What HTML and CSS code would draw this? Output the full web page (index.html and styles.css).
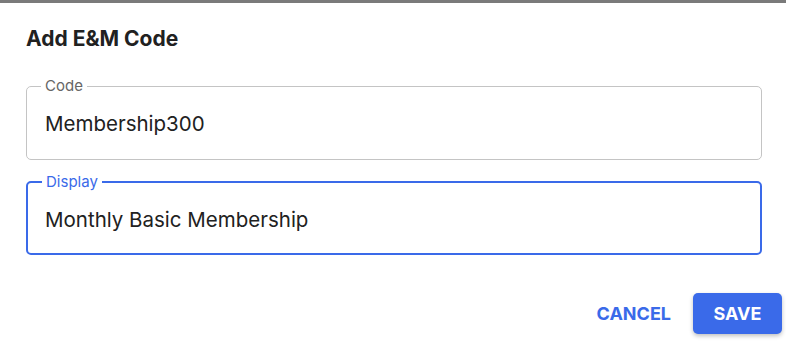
FILE: index.html
```html
<!DOCTYPE html>
<html lang="en">
<head>
<meta charset="utf-8">
<title>Add E&amp;M Code</title>
<link rel="stylesheet" href="styles.css">
</head>
<body>
<div class="topbar"></div>
<div class="dialog">
  <h2 class="title">Add E&amp;M Code</h2>
  <fieldset class="field">
    <legend class="field-label">Code</legend>
    <div class="field-value">Membership300</div>
  </fieldset>
  <fieldset class="field field-focused">
    <legend class="field-label">Display</legend>
    <div class="field-value">Monthly Basic Membership</div>
  </fieldset>
  <div class="actions">
    <button class="btn btn-text">Cancel</button>
    <button class="btn btn-primary">Save</button>
  </div>
</div>
</body>
</html>
```

FILE: styles.css
```css
* { box-sizing: border-box; }
html, body { margin: 0; padding: 0; background: #fff; }
body {
  font-family: Inter, "Noto Sans", sans-serif;
  color: #212121;
  width: 786px;
  height: 344px;
  overflow: hidden;
}
.topbar {
  height: 3px;
  background: #7a7a7a;
}
.dialog {
  padding: 24px 24px 0 26px;
  display: flex;
  flex-direction: column;
}
.title {
  margin: 0;
  font-size: 21px;
  line-height: 24px;
  font-weight: 700;
}
.field {
  margin: 26px 0 0 0;
  width: 736px;
  border: 1px solid #c4c4c4;
  border-radius: 5px;
  padding: 0 18px 0 18px;
  min-width: 0;
}
.field + .field { margin-top: 13px; }
.field-label {
  margin-left: -4px;
  padding: 0 4px;
  font-size: 15px;
  line-height: 18px;
  color: #666;
}
.field-value {
  font-size: 20.5px;
  line-height: 36px;
  height: 64px;
  padding: 11px 0 17px 0;
}
.field-focused {
  border: 2px solid #3a6ae9;
  padding: 0 17px;
}
.field-focused .field-label { color: #3a6ae9; margin-left: -3px; }
.field-focused .field-value {
  height: 62px;
  padding: 11px 0 15px 0;
}
.actions {
  display: flex;
  justify-content: flex-end;
  align-items: center;
  gap: 11px;
  margin-top: 38px;
  margin-right: -20px;
}
.btn {
  font-family: Inter, "Noto Sans", sans-serif;
  font-size: 18px;
  font-weight: 700;
  text-transform: uppercase;
  border: none;
  border-radius: 5px;
  height: 41px;
  padding: 0 11px;
  cursor: pointer;
}
.btn-text {
  background: transparent;
  color: #3a6ae9;
}
.btn-primary {
  background: #3a6ae9;
  color: #fff;
  width: 89px;
  padding: 0;
  box-shadow: 0 2px 4px rgba(0,0,0,0.25);
}
```
